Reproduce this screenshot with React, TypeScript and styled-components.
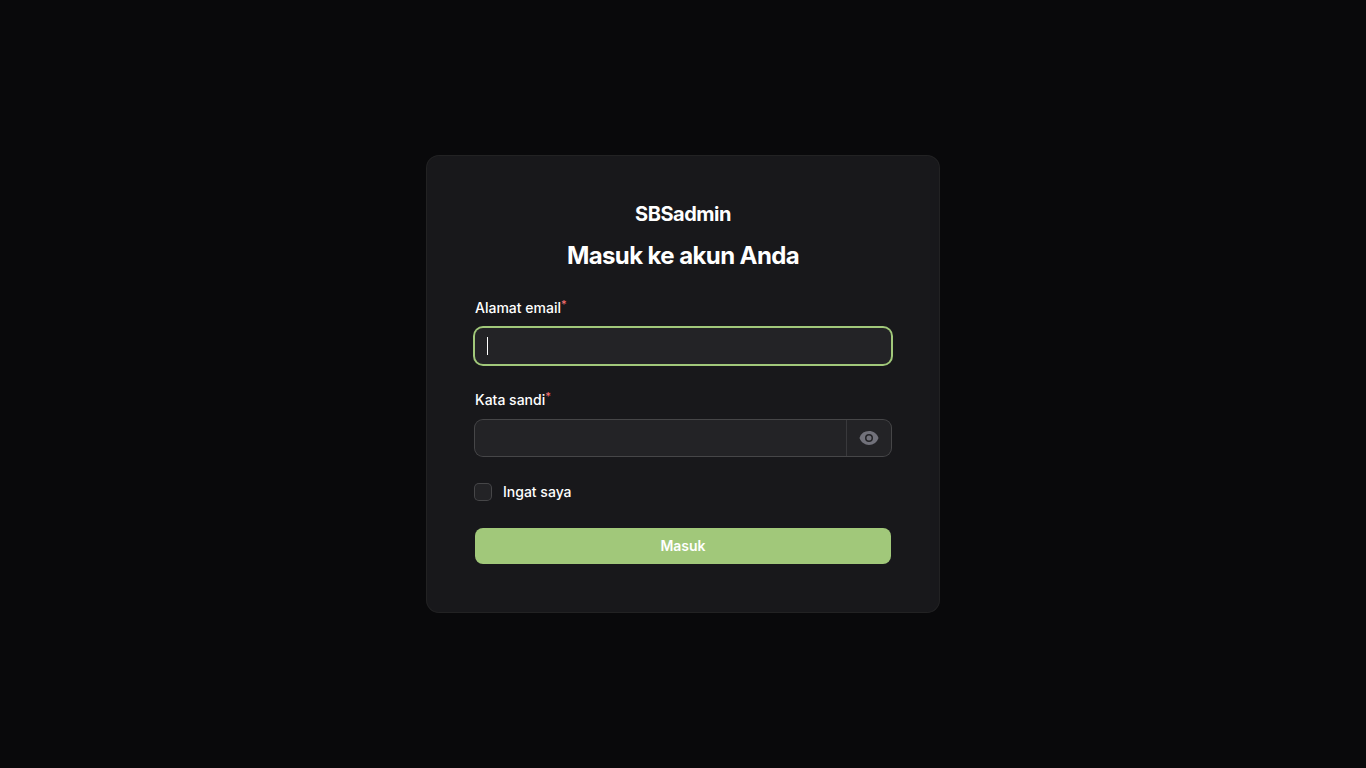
import React, { useState } from "react";
import styled, { createGlobalStyle } from "styled-components";

const GlobalStyle = createGlobalStyle`
  *, *::before, *::after { box-sizing: border-box; }
  body {
    margin: 0;
    background: #09090b;
    color: #fff;
    font-family: Inter, "Liberation Sans", sans-serif;
    font-size: 14px;
    line-height: 24px;
    -webkit-font-smoothing: antialiased;
  }
`;

const Page = styled.div`
  min-height: 100vh;
  display: flex;
  align-items: center;
  justify-content: center;
`;

const Card = styled.main`
  width: 100%;
  max-width: 512px;
  padding: 48px;
  border-radius: 12px;
  background: #18181b;
  box-shadow: 0 0 0 1px rgba(255, 255, 255, 0.1);
`;

const Header = styled.header`
  display: flex;
  flex-direction: column;
  align-items: center;
  text-align: center;
`;

const Brand = styled.div`
  margin-bottom: 16px;
  font-size: 20px;
  line-height: 20px;
  font-weight: 700;
  letter-spacing: -0.025em;
`;

const Title = styled.h1`
  margin: 0;
  font-size: 24px;
  line-height: 32px;
  font-weight: 700;
  letter-spacing: -0.025em;
`;

const Form = styled.form`
  display: grid;
  gap: 24px;
  margin-top: 24px;
`;

const Field = styled.div`
  display: grid;
  gap: 8px;
`;

const Label = styled.label`
  font-weight: 500;
  line-height: 24px;
`;

const Required = styled.sup`
  font-size: 11px;
  line-height: 0;
  vertical-align: 5px;
  color: #f87171;
`;

const InputFrame = styled.div`
  display: flex;
  border-radius: 8px;
  background: rgba(255, 255, 255, 0.05);
  box-shadow: 0 0 0 1px rgba(255, 255, 255, 0.2);
  &:has(input:focus) { box-shadow: 0 0 0 2px #a1c87a; }
`;

const TextInput = styled.input`
  flex: 1;
  min-width: 0;
  height: 36px;
  padding: 6px 12px;
  border: 0;
  outline: 0;
  background: transparent;
  color: #fff;
  font: inherit;

  /* steady insertion mark while the focused field is empty */
  &:focus:placeholder-shown {
    caret-color: transparent;
    background: linear-gradient(#fff, #fff) 12px center / 1px 18px no-repeat;
  }
`;

const Reveal = styled.button`
  display: flex;
  align-items: center;
  padding: 0 12px;
  border: 0;
  border-left: 1px solid rgba(255, 255, 255, 0.1);
  background: transparent;
  color: #71717a;
  cursor: pointer;
`;

const Remember = styled.label`
  display: flex;
  align-items: center;
  gap: 12px;
  font-weight: 500;
`;

const Checkbox = styled.input`
  appearance: none;
  width: 16px;
  height: 16px;
  margin: 0;
  border-radius: 4px;
  background: rgba(255, 255, 255, 0.05);
  box-shadow: 0 0 0 1px rgba(255, 255, 255, 0.2);
  &:checked { background: #a1c87a; }
`;

const Submit = styled.button`
  height: 36px;
  border: 0;
  border-radius: 8px;
  background: #a1c87a;
  color: #fff;
  font: inherit;
  font-weight: 600;
  cursor: pointer;
`;

export default function App() {
  const [visible, setVisible] = useState(false);
  return (
    <Page>
      <GlobalStyle />
      <Card>
        <Header>
          <Brand>SBSadmin</Brand>
          <Title>Masuk ke akun Anda</Title>
        </Header>
        <Form onSubmit={(e) => e.preventDefault()}>
          <Field>
            <Label htmlFor="email">Alamat email<Required>*</Required></Label>
            <InputFrame><TextInput id="email" type="email" placeholder=" " autoFocus /></InputFrame>
          </Field>
          <Field>
            <Label htmlFor="password">Kata sandi<Required>*</Required></Label>
            <InputFrame>
              <TextInput id="password" type={visible ? "text" : "password"} placeholder=" " />
              <Reveal type="button" aria-label="Tampilkan kata sandi" onClick={() => setVisible(!visible)}>
                <svg width="20" height="20" viewBox="0 0 20 20" fill="currentColor" aria-hidden="true">
                  <path d="M10 12.5a2.5 2.5 0 1 0 0-5 2.5 2.5 0 0 0 0 5Z" />
                  <path fillRule="evenodd" clipRule="evenodd" d="M.664 10.59a1.651 1.651 0 0 1 0-1.186A10.004 10.004 0 0 1 10 3c4.257 0 7.893 2.66 9.336 6.41.147.381.146.804 0 1.186A10.004 10.004 0 0 1 10 17c-4.257 0-7.893-2.66-9.336-6.41ZM14 10a4 4 0 1 1-8 0 4 4 0 0 1 8 0Z" />
                </svg>
              </Reveal>
            </InputFrame>
          </Field>
          <Remember><Checkbox type="checkbox" />Ingat saya</Remember>
          <Submit type="submit">Masuk</Submit>
        </Form>
      </Card>
    </Page>
  );
}
